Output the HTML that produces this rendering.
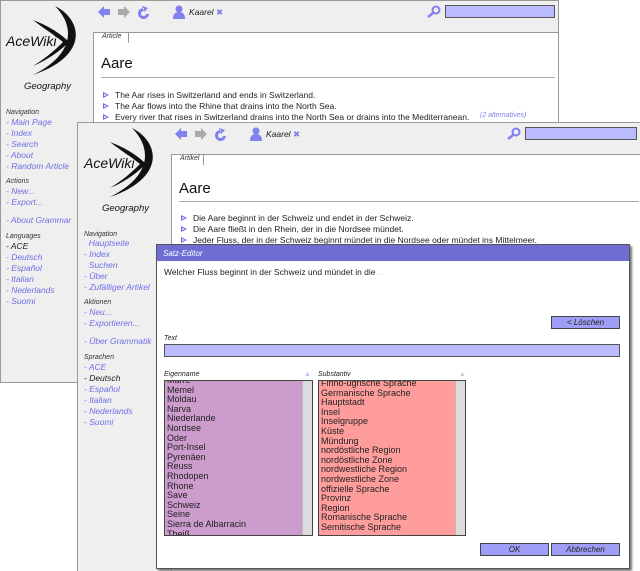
<!DOCTYPE html>
<html><head><meta charset="utf-8"><style>
*{margin:0;padding:0;box-sizing:border-box}
html,body{width:640px;height:571px;overflow:hidden}
body{background:#fff;font-family:"Liberation Sans",sans-serif;position:relative}
.win{position:absolute;background:#efefef;border:1px solid #999;overflow:hidden}
.abs{position:absolute;white-space:nowrap}
.i{font-style:italic}
.lnk{color:#6e6ee6;font-style:italic;font-size:8.5px}
.hd{font-size:7px;font-style:italic;color:#333}
.content{position:absolute;background:#fff;border-left:1px solid #999;border-top:1px solid #999}
.sb{position:absolute;background:#bbf;border:1px solid #555}
.sent{font-size:8.5px;color:#222}
.tri{position:absolute;width:0;height:0;border-left:6px solid #6e6ee6;border-top:3.5px solid transparent;border-bottom:3.5px solid transparent}
.tri::after{content:"";position:absolute;left:-5px;top:-1.5px;border-left:3px solid #fff;border-top:1.5px solid transparent;border-bottom:1.5px solid transparent}
.btn{position:absolute;background:#9e9ef6;border:1px solid #444;font-size:8px;font-style:italic;text-align:center;color:#222;line-height:11px}
.list{position:absolute;border:1px solid #444;overflow:hidden}
.list div{font-size:9px;color:#222;line-height:9.6px;padding-left:2px}
.scr{position:absolute;right:0;top:0;width:10px;height:100%;background:#ddd;border-left:1px solid #bbb}
</style></head><body>

<!-- Window 1 -->
<div class="win" style="left:0;top:0;width:559px;height:383px">
 <svg class="abs" style="left:2px;top:3px" width="82" height="72" viewBox="0 0 82 72"><path d="M52 2 C80 16 86 52 30 71 C72 50 72 22 52 2Z" fill="#111"/><path d="M30 16 C46 22 58 30 66 38 C56 48 44 56 30 62 C46 52 54 44 60 38 C50 30 40 24 30 16Z" fill="#111"/></svg>
 <div class="abs i" style="left:5px;top:32px;font-size:14px;color:#111">AceWiki</div>
 <div class="abs i" style="left:23px;top:80px;font-size:9.5px;color:#111">Geography</div>
 <div class="abs hd" style="left:5px;top:108px">Navigation</div>
 <div class="abs lnk" style="left:5px;top:116px;line-height:11px">- Main Page<br>- Index<br>- Search<br>- About<br>- Random Article</div>
 <div class="abs hd" style="left:5px;top:177px">Actions</div>
 <div class="abs lnk" style="left:5px;top:185px;line-height:11px">- New...<br>- Export...</div>
 <div class="abs lnk" style="left:5px;top:214px">- About Grammar</div>
 <div class="abs hd" style="left:5px;top:232px">Languages</div>
 <div class="abs lnk" style="left:5px;top:240px;line-height:11px"><span style="color:#222">- ACE</span><br>- Deutsch<br>- Español<br>- Italian<br>- Nederlands<br>- Suomi</div>
 <svg class="abs" style="left:96px;top:4px" width="60" height="16"><path d="M1 7 L7 1 V4 H13 V10 H7 V13Z" fill="#8080ee"/><path d="M33 7 L27 1 V4 H21 V10 H27 V13Z" fill="#aaa"/><path d="M47 3 A5.5 5.5 0 1 0 52 9 L49 9 A2.5 2.5 0 1 1 46.5 6Z M45 1 L51 3 L47 7Z" fill="#8080ee"/></svg>
 <svg class="abs" style="left:171px;top:3px" width="14" height="16"><circle cx="7" cy="5" r="3.5" fill="#8080ee"/><path d="M1 15 Q1 8 7 8 Q13 8 13 15Z" fill="#8080ee"/></svg>
 <div class="abs i" style="left:188px;top:6px;font-size:8.5px;color:#222">Kaarel <span style="color:#8080ee;font-style:normal">✖</span></div>
 <svg class="abs" style="left:425px;top:4px" width="16" height="14"><circle cx="10" cy="5" r="3.5" fill="none" stroke="#8080ee" stroke-width="2"/><path d="M7 8 L2 12" stroke="#8080ee" stroke-width="2.5"/></svg>
 <div class="sb" style="left:444px;top:4px;width:110px;height:13px"></div>
 <div class="content" style="left:92px;top:31px;width:470px;height:360px">
  <div class="abs" style="left:0;top:0;width:35px;height:10px;border-right:1px solid #999;font-size:7px;font-style:italic;padding-left:8px;color:#333">Article</div>
  <div class="abs" style="left:7px;top:22px;font-size:15px;color:#111">Aare</div>
  <div class="abs" style="left:7px;top:44px;width:454px;border-top:1px solid #aaa"></div>
  <div class="tri" style="left:9px;top:59px"></div><div class="abs sent" style="left:21px;top:57px">The Aar rises in Switzerland and ends in Switzerland.</div>
  <div class="tri" style="left:9px;top:70px"></div><div class="abs sent" style="left:21px;top:68px">The Aar flows into the Rhine that drains into the North Sea.</div>
  <div class="tri" style="left:9px;top:81px"></div><div class="abs sent" style="left:21px;top:79px">Every river that rises in Switzerland drains into the North Sea or drains into the Mediterranean.</div>
  <div class="abs" style="left:386px;top:79px;font-size:7px;font-style:italic;color:#8080ee">(2 alternatives)</div>
 </div>
</div>

<!-- Window 2 -->
<div class="win" style="left:77px;top:122px;width:570px;height:449px;border-bottom:none">
 <svg class="abs" style="left:2px;top:3px" width="82" height="72" viewBox="0 0 82 72"><path d="M52 2 C80 16 86 52 30 71 C72 50 72 22 52 2Z" fill="#111"/><path d="M30 16 C46 22 58 30 66 38 C56 48 44 56 30 62 C46 52 54 44 60 38 C50 30 40 24 30 16Z" fill="#111"/></svg>
 <div class="abs i" style="left:6px;top:32px;font-size:14px;color:#111">AceWiki</div>
 <div class="abs i" style="left:24px;top:80px;font-size:9.5px;color:#111">Geography</div>
 <div class="abs hd" style="left:6px;top:108px">Navigation</div>
 <div class="abs lnk" style="left:6px;top:115px;line-height:11px">&nbsp; Hauptseite<br>- Index<br>&nbsp; Suchen<br>- Über<br>- Zufälliger Artikel</div>
 <div class="abs hd" style="left:6px;top:176px">Aktionen</div>
 <div class="abs lnk" style="left:6px;top:184px;line-height:11px">- Neu...<br>- Exportieren...</div>
 <div class="abs lnk" style="left:6px;top:213px">- Über Grammatik</div>
 <div class="abs hd" style="left:6px;top:231px">Sprachen</div>
 <div class="abs lnk" style="left:6px;top:239px;line-height:11px">- ACE<br><span style="color:#222">- Deutsch</span><br>- Español<br>- Italian<br>- Nederlands<br>- Suomi</div>
 <svg class="abs" style="left:96px;top:4px" width="60" height="16"><path d="M1 7 L7 1 V4 H13 V10 H7 V13Z" fill="#8080ee"/><path d="M33 7 L27 1 V4 H21 V10 H27 V13Z" fill="#aaa"/><path d="M47 3 A5.5 5.5 0 1 0 52 9 L49 9 A2.5 2.5 0 1 1 46.5 6Z M45 1 L51 3 L47 7Z" fill="#8080ee"/></svg>
 <svg class="abs" style="left:171px;top:3px" width="14" height="16"><circle cx="7" cy="5" r="3.5" fill="#8080ee"/><path d="M1 15 Q1 8 7 8 Q13 8 13 15Z" fill="#8080ee"/></svg>
 <div class="abs i" style="left:188px;top:6px;font-size:8.5px;color:#222">Kaarel <span style="color:#8080ee;font-style:normal">✖</span></div>
 <svg class="abs" style="left:428px;top:4px" width="16" height="14"><circle cx="10" cy="5" r="3.5" fill="none" stroke="#8080ee" stroke-width="2"/><path d="M7 8 L2 12" stroke="#8080ee" stroke-width="2.5"/></svg>
 <div class="sb" style="left:447px;top:4px;width:112px;height:13px"></div>
 <div class="content" style="left:93px;top:31px;width:480px;height:440px">
  <div class="abs" style="left:0;top:0;width:32px;height:10px;border-right:1px solid #999;font-size:7px;font-style:italic;padding-left:8px;color:#333">Artikel</div>
  <div class="abs" style="left:7px;top:25px;font-size:15px;color:#111">Aare</div>
  <div class="abs" style="left:7px;top:46px;width:460px;border-top:1px solid #aaa"></div>
  <div class="tri" style="left:9px;top:60px"></div><div class="abs sent" style="left:21px;top:58px">Die Aare beginnt in der Schweiz und endet in der Schweiz.</div>
  <div class="tri" style="left:9px;top:71px"></div><div class="abs sent" style="left:21px;top:69px">Die Aare fließt in den Rhein, der in die Nordsee mündet.</div>
  <div class="tri" style="left:9px;top:82px"></div><div class="abs sent" style="left:21px;top:80px">Jeder Fluss, der in der Schweiz beginnt mündet in die Nordsee oder mündet ins Mittelmeer.</div>
 </div>
</div>

<!-- Dialog -->
<div class="abs" style="left:156px;top:244px;width:474px;height:325px;background:#fff;border:1px solid #555;box-shadow:2px 2px 2px #777">
 <div class="abs" style="left:0;top:0;width:472px;height:16px;background:#6e6ed2;color:#fff;font-size:8px;font-style:italic;padding:4px 0 0 6px">Satz-Editor</div>
 <div class="abs" style="left:7px;top:22px;font-size:8.5px;color:#222">Welcher Fluss beginnt in der Schweiz und mündet in die <span style="color:#ccc">...</span></div>
 <div class="btn" style="left:394px;top:71px;width:69px;height:13px">&lt; Löschen</div>
 <div class="abs" style="left:7px;top:90px;font-size:7px;font-style:italic;color:#222">Text</div>
 <div class="sb" style="left:7px;top:99px;width:456px;height:13px;background:#bbf"></div>
 <div class="abs" style="left:7px;top:126px;font-size:7px;font-style:italic;color:#222">Eigenname</div>
 <div class="abs" style="left:147px;top:126px;font-size:7px;color:#bbf">▲</div>
 <div class="abs" style="left:161px;top:126px;font-size:7px;font-style:italic;color:#222">Substantiv</div>
 <div class="abs" style="left:302px;top:126px;font-size:7px;color:#ccc">▲</div>
 <div class="list" style="left:7px;top:135px;width:149px;height:156px;background:#cc9ccc">
  <div style="margin-top:-5px">Marre</div><div>Memel</div><div>Moldau</div><div>Narva</div><div>Niederlande</div><div>Nordsee</div><div>Oder</div><div>Port-Insel</div><div>Pyrenäen</div><div>Reuss</div><div>Rhodopen</div><div>Rhone</div><div>Save</div><div>Schweiz</div><div>Seine</div><div>Sierra de Albarracin</div><div>Theiß</div>
  <div class="scr"></div>
 </div>
 <div class="list" style="left:161px;top:135px;width:148px;height:156px;background:#ff9c9c">
  <div style="margin-top:-2px">Finno-ugrische Sprache</div><div>Germanische Sprache</div><div>Hauptstadt</div><div>Insel</div><div>Inselgruppe</div><div>Küste</div><div>Mündung</div><div>nordöstliche Region</div><div>nordöstliche Zone</div><div>nordwestliche Region</div><div>nordwestliche Zone</div><div>offizielle Sprache</div><div>Provinz</div><div>Region</div><div>Romanische Sprache</div><div>Semitische Sprache</div>
  <div class="scr"></div>
 </div>
 <div class="btn" style="left:323px;top:298px;width:69px;height:13px">OK</div>
 <div class="btn" style="left:394px;top:298px;width:69px;height:13px">Abbrechen</div>
</div>
</body></html>
